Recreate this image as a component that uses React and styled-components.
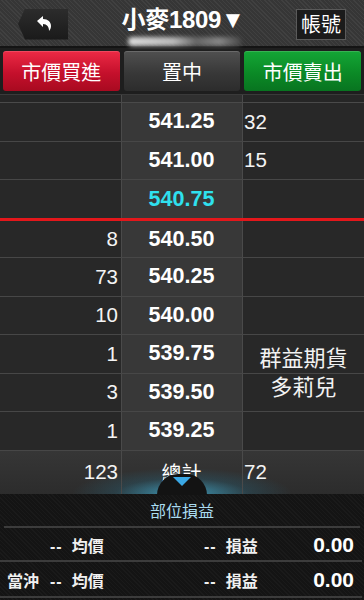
import React from "react";
import styled, { createGlobalStyle } from "styled-components";

const Global = createGlobalStyle`
  html, body { margin: 0; padding: 0; background: #1a1a1a; }
  #root { width: 364px; height: 600px; overflow: hidden; }
  * { box-sizing: border-box; }
`;

const CJK = `"Noto Sans CJK TC", "Noto Sans CJK SC", sans-serif`;
const NUM = `"Liberation Sans", Arial, "Noto Sans CJK TC", sans-serif`;

const Page = styled.div`
  width: 364px;
  height: 600px;
  display: flex;
  flex-direction: column;
  background: #1c1c1c;
  font-family: ${CJK};
  color: #fff;
`;

const Header = styled.header`
  height: 48px;
  flex: none;
  display: flex;
  align-items: center;
  justify-content: space-between;
  padding: 0 18px;
  position: relative;
  background: repeating-linear-gradient(45deg, #404040 0 1px, #363636 1px 3px);
  border-bottom: 2px solid #141414;
`;

const BackButton = styled.button`
  width: 50px;
  height: 31px;
  margin-top: 2px;
  border: none;
  padding: 0 0 0 4px;
  display: flex;
  align-items: center;
  justify-content: center;
  background: linear-gradient(#2c2c2c, #1a1a1a);
  clip-path: polygon(14% 0, 100% 0, 100% 100%, 14% 100%, 0 50%);
  cursor: pointer;
`;

const TitleBlock = styled.div`
  position: absolute;
  left: 0;
  right: 0;
  top: 3px;
  display: flex;
  flex-direction: column;
  align-items: center;
  pointer-events: none;
`;

const Title = styled.div`
  font-family: ${NUM};
  font-weight: 700;
  font-size: 24px;
  line-height: 30px;
  letter-spacing: -0.3px;
  color: #fff;
  margin-left: 2px;
  span { font-family: ${CJK}; font-weight: 700; }
`;

const Blurred = styled.div`
  width: 114px;
  height: 9px;
  margin-top: 2px;
  margin-left: 6px;
  border-radius: 5px;
  background: linear-gradient(90deg, #ddd 0%, #bbb 40%, #666 60%, #888 80%, #444 100%);
  filter: blur(2px);
`;

const AccountButton = styled.button`
  width: 50px;
  height: 31px;
  margin-top: 2px;
  border: 1px solid #5a5a5a;
  background: #1b1b1b;
  color: #fff;
  font-family: ${CJK};
  font-size: 20px;
  line-height: 1;
  padding: 0;
  display: flex;
  align-items: center;
  justify-content: center;
  cursor: pointer;
`;

const ActionBar = styled.div`
  height: 46px;
  flex: none;
  display: flex;
  gap: 4px;
  padding: 3px;
  background: #1e1e1e;
`;

const palettes = {
  buy: "linear-gradient(#ec2a45, #c5102c 55%, #a80a20)",
  center: "linear-gradient(#505050, #383838 55%, #2c2c2c)",
  sell: "linear-gradient(#14a636, #0b8a26 55%, #087420)",
};

const ActionButton = styled.button`
  flex: 1;
  height: 40px;
  border: none;
  border-radius: 3px;
  background: ${(p) => palettes[p.$tone]};
  box-shadow: inset 0 1px 0 rgba(255, 255, 255, 0.15);
  color: #fff;
  font-family: ${CJK};
  font-size: 20px;
  padding: 0;
  cursor: pointer;
`;

const Strip = styled.div`
  height: 9px;
  flex: none;
  display: grid;
  grid-template-columns: 122px 121px 121px;
  background: #262626;
  border-top: 1px solid #3a3a3a;
  border-bottom: 1px solid #4a4a4a;
`;

const StripCell = styled.div`
  border-right: ${(p) => (p.$last ? "none" : "1px solid #4a4a4a")};
  background: ${(p) => (p.$center ? "#303030" : "transparent")};
`;

const Table = styled.div`
  flex: none;
  display: flex;
  flex-direction: column;
`;

const Row = styled.div`
  height: ${(p) => p.$h || 38.5}px;
  display: grid;
  grid-template-columns: 122px 121px 121px;
  border-bottom: ${(p) => (p.$noLine ? "none" : "1px solid #474747")};
  background: ${(p) => p.$bg || "transparent"};
  position: relative;
`;

const SideCell = styled.div`
  display: flex;
  align-items: center;
  justify-content: ${(p) => (p.$align === "right" ? "flex-end" : "flex-start")};
  padding: ${(p) => (p.$align === "right" ? "0 3px 0 0" : "0 0 0 1px")};
  background: ${(p) => (p.$clear ? "transparent" : "#282828")};
  border-right: ${(p) => (p.$align === "right" ? "1px solid #4a4a4a" : "none")};
  font-family: ${NUM};
  font-size: 20.5px;
  color: #f4f4f4;
  position: relative;
`;

const PriceCell = styled.div`
  display: flex;
  align-items: center;
  justify-content: center;
  background: ${(p) => (p.$clear ? "transparent" : "#383838")};
  border-right: 1px solid #4a4a4a;
  font-family: ${NUM};
  font-weight: 700;
  font-size: 21.5px;
  color: ${(p) => (p.$current ? "#2fe0ee" : "#ffffff")};
  padding-right: 1px;
  span { font-family: ${CJK}; font-weight: 400; font-size: 20px; }
`;

const RedLine = styled.div`
  height: 3px;
  flex: none;
  background: #e3171b;
`;

const Watermark = styled.div`
  position: absolute;
  left: 0;
  right: 0;
  top: 7px;
  text-align: center;
  font-family: ${CJK};
  font-size: 22px;
  line-height: 29px;
  color: #f2f2f2;
  pointer-events: none;
  z-index: 2;
`;

const Tab = styled.div`
  position: absolute;
  left: 157px;
  bottom: -1px;
  width: 50px;
  height: 21px;
  border-radius: 25px 25px 0 0;
  background: #131313;
  display: flex;
  justify-content: center;
  padding-top: 3px;
  z-index: 3;
`;

const Bottom = styled.div`
  flex: 1;
  display: flex;
  flex-direction: column;
  background: repeating-linear-gradient(45deg, #1a1a1a 0 1px, #141414 1px 3px);
`;

const PanelTitle = styled.div`
  height: 34px;
  flex: none;
  display: flex;
  align-items: center;
  justify-content: center;
  font-size: 16px;
  color: #aadcf0;
  border-bottom: 2px solid #3c3c3c;
  margin: 0 4px;
`;

const StatRow = styled.div`
  height: ${(p) => p.$h}px;
  flex: none;
  display: grid;
  grid-template-columns: 43px 154px 1fr auto;
  align-items: center;
  padding: 2px 8px 0 7px;
  border-bottom: 2px solid #3c3c3c;
  margin: 0 2px 0 0;
  font-weight: 700;
  font-size: 16px;
  color: #f0f0f0;
`;

const Dash = styled.span`
  font-family: ${NUM};
  font-weight: 700;
  margin-right: 9px;
  letter-spacing: 1px;
`;

const StatValue = styled.span`
  font-family: ${NUM};
  font-weight: 700;
  font-size: 21px;
  color: #fff;
`;

const ReplyIcon = () => (
  <svg width="18" height="18" viewBox="0 0 18 18">
    <path d="M1 6 L7 1 L7 4 C12 4 15 7 15 11 C15 13 14 15 13 16 C13 12 11 9 7 9 L7 12 Z" fill="#fff" />
  </svg>
);

const asks = [
  { price: "541.25", qty: "32" },
  { price: "541.00", qty: "15" },
  { price: "540.75", qty: "", current: true },
];
const bids = [
  { price: "540.50", qty: "8" },
  { price: "540.25", qty: "73" },
  { price: "540.00", qty: "10" },
  { price: "539.75", qty: "1", mark: true },
  { price: "539.50", qty: "3" },
  { price: "539.25", qty: "1" },
];

export default function App() {
  return (
    <>
      <Global />
      <Page>
        <Header>
          <BackButton aria-label="back">
            <ReplyIcon />
          </BackButton>
          <TitleBlock>
            <Title>
              <span>小麥</span>1809▼
            </Title>
            <Blurred />
          </TitleBlock>
          <AccountButton>帳號</AccountButton>
        </Header>

        <ActionBar>
          <ActionButton $tone="buy">市價買進</ActionButton>
          <ActionButton $tone="center">置中</ActionButton>
          <ActionButton $tone="sell">市價賣出</ActionButton>
        </ActionBar>

        <Strip>
          <StripCell />
          <StripCell $center />
          <StripCell $last />
        </Strip>

        <Table>
          {asks.map((r, i) => (
            <Row key={r.price} $noLine={i === asks.length - 1} $h={i === asks.length - 1 ? 38 : 38.5}>
              <SideCell $align="right" />
              <PriceCell $current={r.current}>{r.price}</PriceCell>
              <SideCell $align="left">{r.qty}</SideCell>
            </Row>
          ))}
          <RedLine />
          {bids.map((r) => (
            <Row key={r.price} $h={r.price === "540.50" ? 37 : 38.5}>
              <SideCell $align="right">{r.qty}</SideCell>
              <PriceCell>{r.price}</PriceCell>
              <SideCell $align="left">
                {r.mark && (
                  <Watermark>
                    群益期貨
                    <br />
                    多莉兒
                  </Watermark>
                )}
              </SideCell>
            </Row>
          ))}
          <Row
            $h={43}
            $noLine
            $bg="radial-gradient(ellipse 110px 26px at 50% 100%, rgba(70,190,230,0.75), rgba(40,120,150,0.25) 60%, transparent), linear-gradient(#363636, #2c2c2c)"
          >
            <SideCell $align="right" $clear>123</SideCell>
            <PriceCell $clear>
              <span>總計</span>
            </PriceCell>
            <SideCell $align="left" $clear>72</SideCell>
            <Tab>
              <svg width="18" height="9" viewBox="0 0 18 9">
                <path d="M0 0 H18 L9 9 Z" fill="#3aa8e6" />
              </svg>
            </Tab>
          </Row>
        </Table>

        <Bottom>
          <PanelTitle>部位損益</PanelTitle>
          <StatRow $h={34}>
            <span />
            <span>
              <Dash>--</Dash>均價
            </span>
            <span>
              <Dash>--</Dash>損益
            </span>
            <StatValue>0.00</StatValue>
          </StatRow>
          <StatRow $h={36}>
            <span>當沖</span>
            <span>
              <Dash>--</Dash>均價
            </span>
            <span>
              <Dash>--</Dash>損益
            </span>
            <StatValue>0.00</StatValue>
          </StatRow>
        </Bottom>
      </Page>
    </>
  );
}
